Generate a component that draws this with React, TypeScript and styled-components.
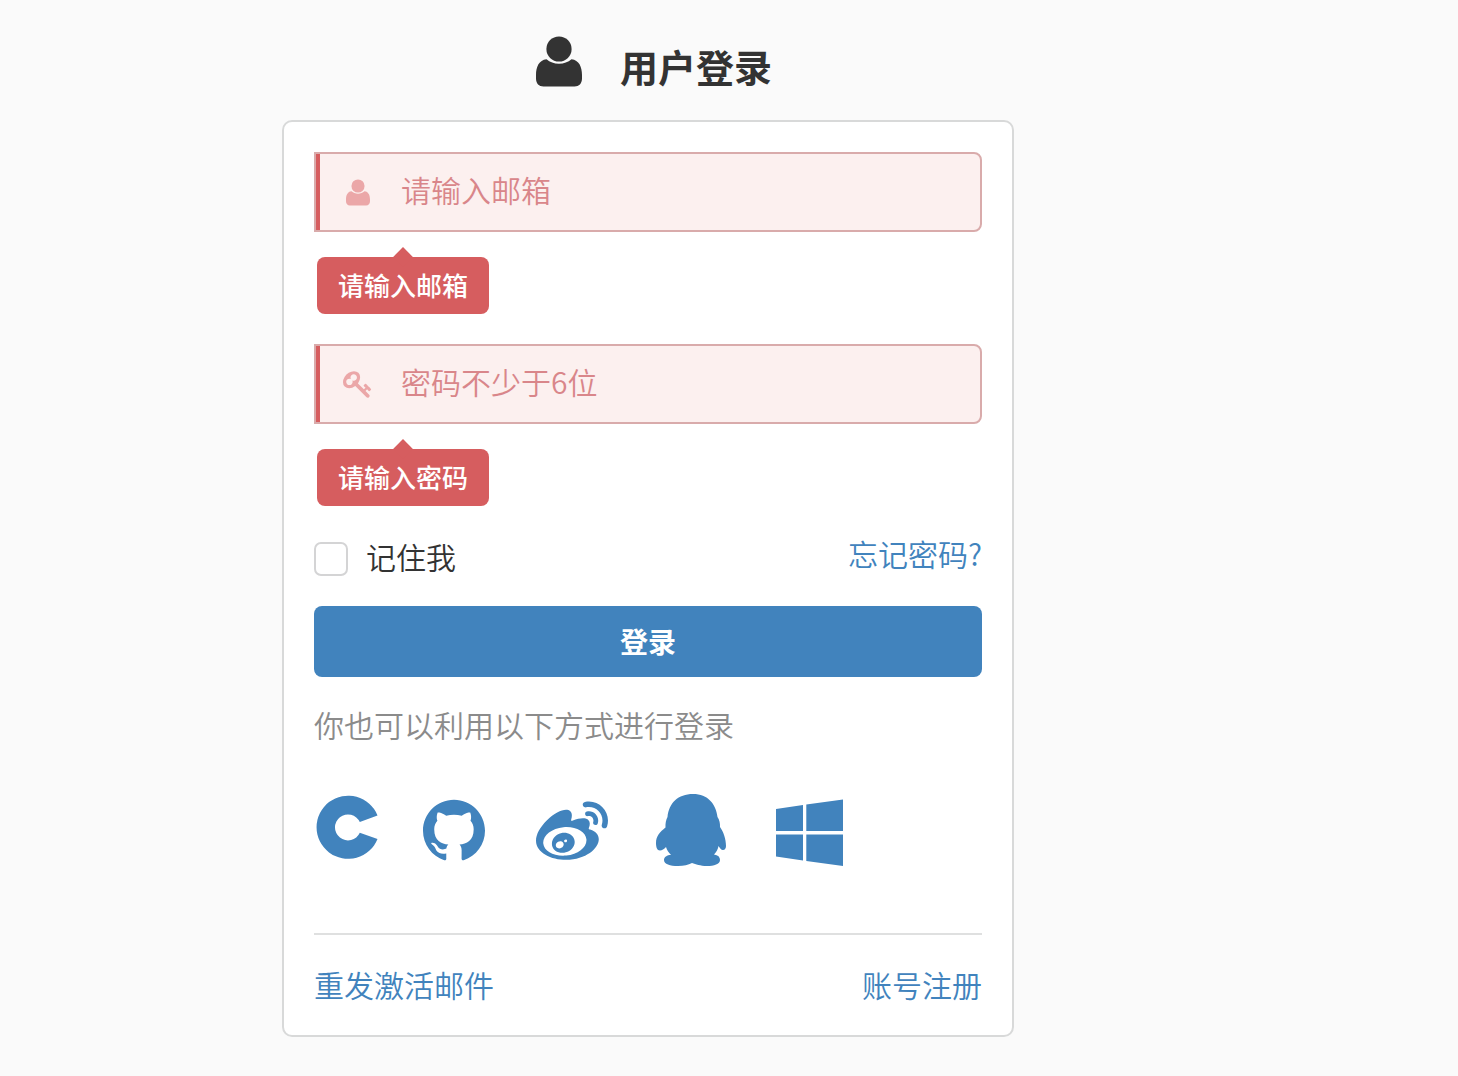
import React from "react";
import styled, { createGlobalStyle } from "styled-components";
import { FaWeibo } from "react-icons/fa";

const BLUE = "#4183bd";
const RED = "#d65d5f";
const CJK = `"Noto Sans CJK SC", sans-serif`;

const GlobalStyle = createGlobalStyle`
  * { box-sizing: border-box; }
  body {
    margin: 0;
    background: #fafafa;
    color: #333;
    font-family: "Liberation Sans", "Noto Sans CJK SC", sans-serif;
    font-size: 30px;
    line-height: 40px;
    font-weight: 350;
  }
`;

const Page = styled.div`
  display: flex;
  flex-direction: column;
  align-items: center;
  padding: 36px 162px 39px 0;
`;

const Header = styled.header`
  display: flex;
  align-items: flex-end;
  gap: 38px;
  margin-bottom: 33px;
  padding-left: 12px;
`;

const Title = styled.h1`
  margin: 0;
  font-size: 38px;
  line-height: 36px;
  font-weight: 700;
`;

const Card = styled.form`
  display: flex;
  flex-direction: column;
  width: 100%;
  max-width: 732px;
  padding: 30px 30px 34px;
  background: #fff;
  border: 2px solid #d8d9d9;
  border-radius: 10px;
`;

const Field = styled.div`
  display: flex;
  flex-direction: column;
  align-items: flex-start;
  gap: 25px;
  margin-bottom: 30px;
`;

const InputBox = styled.label`
  display: flex;
  align-items: center;
  width: 100%;
  height: 80px;
  padding-left: 26px;
  background: #fcf0ef;
  border: 2px solid #d9abab;
  border-radius: 0 8px 8px 0;
  box-shadow: inset 4px 0 0 ${RED};
  color: #eba7a8;
`;

const IconSlot = styled.span`
  display: flex;
  align-items: center;
  justify-content: center;
  width: 32px;
  margin-right: 27px;
`;

const Input = styled.input`
  flex: 1;
  min-width: 0;
  height: 40px;
  padding: 0 0 6px;
  border: 0;
  outline: 0;
  background: transparent;
  color: #d6797c;
  font: inherit;
  font-family: ${CJK};
  line-height: 34px;
  &::placeholder { color: #d9868a; opacity: 1; }
`;

const Prompt = styled.div`
  position: relative;
  margin-left: 3px;
  padding: 10px 21px 7px;
  background: ${RED};
  border-radius: 8px;
  color: #fff;
  font-size: 26px;
  font-weight: 500;
  &::before {
    content: "";
    position: absolute;
    top: -7px;
    left: 50%;
    width: 14px;
    height: 14px;
    margin-left: -7px;
    background: ${RED};
    transform: rotate(45deg);
  }
`;

const Row = styled.div`
  display: flex;
  justify-content: space-between;
  align-items: flex-start;
`;

const Remember = styled.label`
  display: flex;
  align-items: center;
  gap: 18px;
  padding-top: 3px;
`;

const Checkbox = styled.input`
  appearance: none;
  width: 34px;
  height: 34px;
  margin: 0;
  border: 2px solid #d4d4d5;
  border-radius: 7px;
  background: #fff;
  &:checked { background: ${BLUE}; }
`;

const TextLink = styled.a`
  color: ${BLUE};
  font-family: ${CJK};
  line-height: 34px;
  text-decoration: none;
`;

const Submit = styled.button`
  height: 71px;
  margin: 27px 0 30px;
  padding: 4px 0 0;
  border: 0;
  border-radius: 8px;
  background: ${BLUE};
  color: #fff;
  font: inherit;
  font-size: 28px;
  font-weight: 700;
`;

const Hint = styled.p`
  margin: 0 0 47px;
  color: #8b8b8b;
`;

const Socials = styled.nav`
  display: flex;
  gap: 40px;
  padding-bottom: 67px;
  border-bottom: 2px solid #dfe0e0;
  margin-bottom: 32px;
`;

const Social = styled.a<{ $width: number }>`
  display: flex;
  align-items: center;
  justify-content: center;
  width: ${(p) => p.$width}px;
  height: 72px;
  color: ${BLUE};
`;

const WeiboMark = styled(FaWeibo)`
  width: 72px;
  height: 78px;
  padding-top: 6px;
`;

const UserIcon = ({ width, height }: { width: number; height: number }) => (
  <svg width={width} height={height} viewBox="0 0 46 51" fill="currentColor" aria-hidden="true">
    <circle cx="23" cy="13" r="12.6" />
    <path d="M10.5 23.3C3 24 0 31 0 39v3.500C0 47.500 3 50.500 7.500 50.500h31C43 50.500 46 47.500 46 42.500V39c0-8-3-15-10.500-15.700-3.500 2.800-7.500 4.500-12.500 4.500s-9-1.700-12.500-4.500z" />
  </svg>
);

const KeyIcon = () => (
  <svg width="30" height="30" viewBox="0 0 1792 1792" fill="currentColor" aria-hidden="true">
    <path d="M832 512q0-80-56-136t-136-56-136 56-56 136q0 42 19 83-41-19-83-19-80 0-136 56t-56 136 56 136 136 56 136-56 56-136q0-42-19-83 41 19 83 19 80 0 136-56t56-136zm851 704q0 17-49 66t-66 49q-9 0-28.500-16t-36.500-33-38.500-40-24.500-26l-96 96 220 220q28 28 28 68 0 42-39 81t-81 39q-40 0-68-28l-671-671q-176 131-365 131-163 0-265.500-102.500t-102.500-265.500q0-160 95-313t248-248 313-95q163 0 265.500 102.500t102.500 265.500q0 189-131 365l355 355 96-96q-3-3-26-24.500t-40-38.500-33-36.500-16-28.500q0-17 49-66t66-49q13 0 23 10 6 6 46 44.500t82 79.500 86.500 86 73 78 28.500 41z" />
  </svg>
);

const CodingIcon = () => (
  <svg width="66" height="72" viewBox="0 0 66 72" fill="currentColor" aria-hidden="true">
    <path d="M63.500 21.500A31.600 31.600 0 1 0 63.500 45L45.800 38.800A13 13 0 1 1 45.800 28z" />
  </svg>
);

const GithubIcon = () => (
  <svg width="62" height="62" viewBox="0 0 24 24" fill="currentColor" aria-hidden="true">
    <path d="M12 .297c-6.630 0-12 5.373-12 12 0 5.303 3.438 9.800 8.205 11.385.600.113.820-.258.820-.577 0-.285-.010-1.040-.015-2.040-3.338.724-4.042-1.610-4.042-1.610C4.422 18.070 3.633 17.700 3.633 17.700c-1.087-.744.084-.729.084-.729 1.205.084 1.838 1.236 1.838 1.236 1.070 1.835 2.809 1.305 3.495.998.108-.776.417-1.305.760-1.605-2.665-.300-5.466-1.332-5.466-5.930 0-1.310.465-2.380 1.235-3.220-.135-.303-.540-1.523.105-3.176 0 0 1.005-.322 3.300 1.230.960-.267 1.980-.399 3-.405 1.020.006 2.040.138 3 .405 2.280-1.552 3.285-1.230 3.285-1.230.645 1.653.240 2.873.120 3.176.765.840 1.230 1.910 1.230 3.220 0 4.610-2.805 5.625-5.475 5.920.420.360.810 1.096.810 2.220 0 1.606-.015 2.896-.015 3.286 0 .315.210.690.825.570C20.565 22.092 24 17.592 24 12.297c0-6.627-5.373-12-12-12" />
  </svg>
);

const QqIcon = () => (
  <svg width="70" height="72" viewBox="0 0 70 72" fill="currentColor" aria-hidden="true">
    <path d="M37 0C52 0 60 10 61.500 23 63.500 26 64.200 29 64 33c3.500 5 6 12 6 19 0 2-1 4-3 4s-3-2-4.500-4c-.5 3-2 6-4.500 8.500 4 .5 6 2.500 6 5.500 0 4-6 6-13 6s-11-2-15-3c-4 2-8 3-14 3-8 0-14-2-14-6 0-3 3-5 7-5-2.500-2.500-4-5-5-8-2 2-4 3.500-6 3.500-3 0-4-3.500-4-7.500 0-7 4-11 9.500-15.500C9.300 29 10 26 11.500 23 13 9 22 0 37 0z" />
  </svg>
);

const WindowsIcon = () => (
  <svg width="67" height="72" viewBox="0 -5 67 72" fill="currentColor" aria-hidden="true">
    <path d="M0 10 27 6V32H0zM30.300 5.500 67 .5V32H30.300zM0 35.500H27V61.500L0 57.500zM30.300 35.500H67V67L30.300 62z" />
  </svg>
);

const socials = [
  { name: "Coding", width: 66, icon: <CodingIcon /> },
  { name: "GitHub", width: 68, icon: <GithubIcon /> },
  { name: "微博", width: 88, icon: <WeiboMark /> },
  { name: "QQ", width: 70, icon: <QqIcon /> },
  { name: "Windows", width: 87, icon: <WindowsIcon /> },
];

export default function App() {
  return (
    <Page>
      <GlobalStyle />
      <Header>
        <UserIcon width={46} height={51} />
        <Title>用户登录</Title>
      </Header>
      <Card onSubmit={(e) => e.preventDefault()} noValidate>
        <Field>
          <InputBox htmlFor="email">
            <IconSlot><UserIcon width={24} height={27} /></IconSlot>
            <Input id="email" type="email" placeholder="请输入邮箱" aria-label="邮箱" />
          </InputBox>
          <Prompt>请输入邮箱</Prompt>
        </Field>
        <Field>
          <InputBox htmlFor="password">
            <IconSlot><KeyIcon /></IconSlot>
            <Input id="password" type="password" placeholder="密码不少于6位" aria-label="密码" />
          </InputBox>
          <Prompt>请输入密码</Prompt>
        </Field>
        <Row>
          <Remember>
            <Checkbox type="checkbox" />
            记住我
          </Remember>
          <TextLink href="#forgot">忘记密码?</TextLink>
        </Row>
        <Submit type="submit">登录</Submit>
        <Hint>你也可以利用以下方式进行登录</Hint>
        <Socials>
          {socials.map((s) => (
            <Social key={s.name} href={"#" + s.name} aria-label={s.name} $width={s.width}>
              {s.icon}
            </Social>
          ))}
        </Socials>
        <Row>
          <TextLink href="#resend">重发激活邮件</TextLink>
          <TextLink href="#register">账号注册</TextLink>
        </Row>
      </Card>
    </Page>
  );
}
